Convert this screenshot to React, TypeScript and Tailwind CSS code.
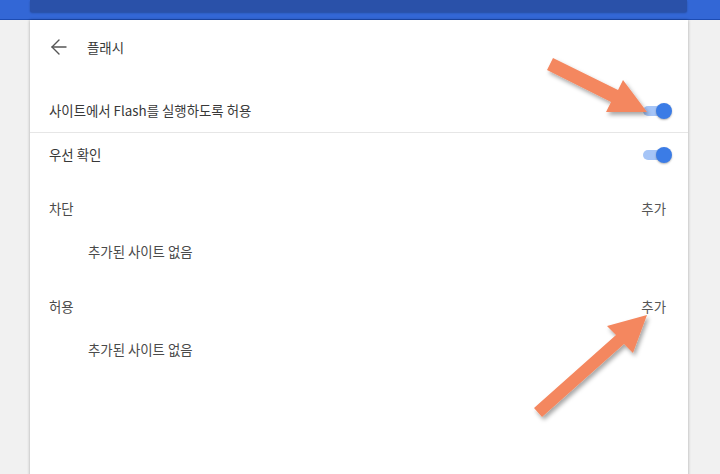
import React from 'react';
import { ArrowLeft } from 'lucide-react';

const Toggle: React.FC = () => (
  <div className="relative w-[29px] h-[16px]">
    <div className="absolute left-0 top-[3px] w-[26px] h-[10px] rounded-full bg-[#a6c5f7]" />
    <div className="absolute right-0 top-0 w-4 h-4 rounded-full bg-[#3b7ce6] shadow-[0_1px_2px_rgba(0,0,0,0.3)]" />
  </div>
);

const Section: React.FC<{ title: string }> = ({ title }) => (
  <div className="pt-[12px]">
    <div className="flex items-center justify-between h-[40px] pl-[19px] pr-[22px]">
      <span className="text-[#4a4a4a]">{title}</span>
      <span className="text-[#555]">추가</span>
    </div>
    <div className="flex items-center h-[46px] pl-[58px] text-[#4a4a4a]">추가된 사이트 없음</div>
  </div>
);

export default function App() {
  return (
    <div
      className="relative w-[720px] h-[474px] overflow-hidden bg-[#f1f1f1] text-[13.4px]"
      style={{ fontFamily: '"Noto Sans CJK KR", "Noto Sans", sans-serif' }}
    >
      {/* top bar */}
      <div className="h-[20px] bg-[#3367d6] border-b border-[#1d4cb3]">
        <div className="ml-[30px] w-[657px] h-[12px] bg-[#2a51a9] rounded-b-[2px] shadow-[0_1px_2px_rgba(0,0,0,0.25)]" />
      </div>

      {/* card */}
      <div className="ml-[30px] w-[658px] h-full bg-white shadow-[0_0_3px_rgba(0,0,0,0.3)]">
        <div className="flex items-center h-[54px] pl-[17px] gap-[16px] text-[#383838]">
          <ArrowLeft size={24} strokeWidth={1.4} className="text-[#555]" />
          <span>플래시</span>
        </div>
        <div className="h-[15px]" />
        <div className="flex items-center justify-between h-[44px] pl-[19px] pr-[16px] border-b border-[#e6e6e6] text-[#383838]">
          <span>사이트에서 Flash를 실행하도록 허용</span>
          <Toggle />
        </div>
        <div className="flex items-center justify-between h-[43px] pl-[19px] pr-[16px] text-[#383838]">
          <span>우선 확인</span>
          <Toggle />
        </div>
        <Section title="차단" />
        <Section title="허용" />
      </div>

      {/* annotation arrows */}
      <svg className="absolute inset-0 pointer-events-none" width="720" height="474">
        <defs>
          <filter id="sh" x="-20%" y="-20%" width="140%" height="140%">
            <feDropShadow dx="2" dy="3" stdDeviation="2" floodColor="#000" floodOpacity="0.35" />
          </filter>
        </defs>
        <polygon
          points="553,58 618,90 623,80 647,112 606,112 611,102 547,70"
          fill="#f4875f"
          filter="url(#sh)"
        />
        <polygon
          points="534,408 616,335 607,326 647,315 633,353 624,344 542,417"
          fill="#f4875f"
          filter="url(#sh)"
        />
      </svg>
    </div>
  );
}
